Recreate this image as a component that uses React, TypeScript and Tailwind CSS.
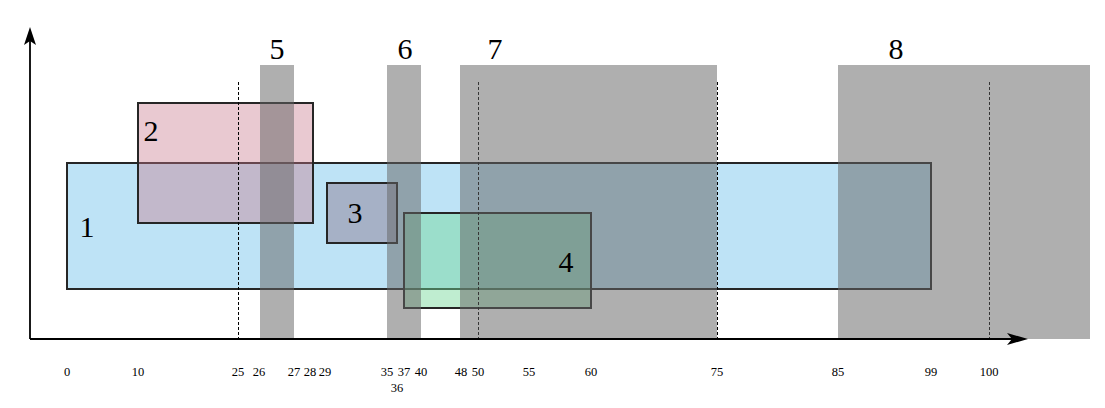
const boxes = [
  { id: 'r1', cls: 'left-[66px] top-[162px] w-[866px] h-[128px] bg-[#bee3f6]' },
  { id: 'r2', cls: 'left-[137px] top-[102px] w-[177px] h-[122px] bg-[rgba(200,120,140,0.4)]' },
  { id: 'r3', cls: 'left-[326px] top-[182px] w-[72px] h-[62px] bg-[#a6b1c6]' },
  { id: 'r4', cls: 'left-[403px] top-[212px] w-[189px] h-[97px] bg-[rgba(113,215,151,0.45)]' },
];

const bars = [
  'left-[260px] w-[34px]',
  'left-[387px] w-[34px]',
  'left-[460px] w-[257px]',
  'left-[838px] w-[252px]',
];

const bigLabels = [
  { text: '5', cls: 'left-[277px] top-[34px]' },
  { text: '6', cls: 'left-[405px] top-[34px]' },
  { text: '7', cls: 'left-[495px] top-[34px]' },
  { text: '8', cls: 'left-[896px] top-[34px]' },
  { text: '1', cls: 'left-[87px] top-[212px]' },
  { text: '2', cls: 'left-[151px] top-[116px]' },
  { text: '3', cls: 'left-[355px] top-[198px]' },
  { text: '4', cls: 'left-[566px] top-[247px]' },
];

const ticks: [string, number][] = [
  ['0', 67], ['10', 138], ['25', 238], ['26', 259], ['27', 294], ['28', 310],
  ['29', 325], ['35', 387], ['37', 404], ['40', 421], ['48', 461], ['50', 478],
  ['55', 529], ['60', 591], ['75', 717], ['85', 838], ['99', 931], ['100', 989],
];

const dashes = [238, 478, 717, 989];

export default function App() {
  return (
    <div className="relative w-[1105px] h-[408px] overflow-hidden bg-white font-['Liberation_Serif',serif] text-black">
      {boxes.map((b) => (
        <div key={b.id} className={`absolute box-border border-2 border-[#262626] ${b.cls}`} />
      ))}

      <svg className="absolute left-0 top-0" width="1105" height="408">
        {dashes.map((x) => (
          <line key={x} x1={x + 0.5} y1={82} x2={x + 0.5} y2={339} stroke="#000" strokeWidth={1} strokeDasharray="3 2" />
        ))}
      </svg>

      {bars.map((c) => (
        <div key={c} className={`absolute top-[65px] h-[274px] bg-[rgba(102,102,102,0.52)] ${c}`} />
      ))}

      <svg className="absolute left-0 top-0" width="1105" height="408">
        <line x1={30} y1={339} x2={1016} y2={339} stroke="#000" strokeWidth={1.8} />
        <line x1={30} y1={339} x2={30} y2={38} stroke="#000" strokeWidth={1.8} />
        <path d="M30 27 L36 45 L30 41 L24 45 Z" fill="#000" />
        <path d="M1028 339 L1007 333 L1012 339 L1007 345 Z" fill="#000" />
      </svg>

      {bigLabels.map((l) => (
        <div key={l.text} className={`absolute -translate-x-1/2 text-[30px] leading-none ${l.cls}`}>
          {l.text}
        </div>
      ))}

      {ticks.map(([t, x]) => (
        <div
          key={t}
          className="absolute top-[366px] -translate-x-1/2 text-[12.5px] leading-none"
          style={{ left: x }}
        >
          {t}
        </div>
      ))}
      <div className="absolute left-[397px] top-[382px] -translate-x-1/2 text-[12.5px] leading-none">36</div>
    </div>
  );
}
